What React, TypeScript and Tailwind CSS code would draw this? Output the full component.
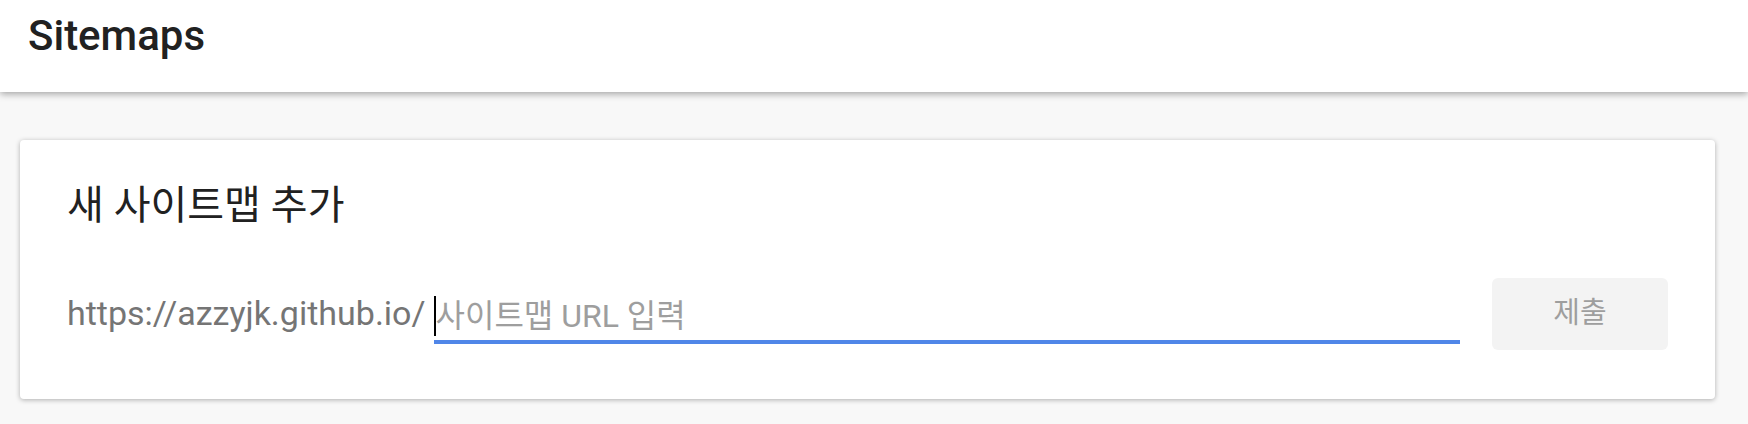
import React from "react";

export default function App() {
  return (
    <div className="min-h-screen bg-[#f8f8f8] font-['Roboto','Noto_Sans_CJK_KR',sans-serif]">
      <header className="relative z-10 h-[92px] bg-white pl-[28px] pt-[11px] shadow-[0_2px_7px_rgba(0,0,0,0.35)]">
        <h1 className="text-[42px] leading-[49px] font-medium text-[#212121]">Sitemaps</h1>
      </header>
      <main className="pt-[48px] pl-[20px] pr-[33px]">
        <section className="rounded-[4px] bg-white pt-[42px] pl-[47px] pr-[47px] pb-[49px] shadow-[0_1px_5px_rgba(0,0,0,0.3)]">
          <h2 className="text-[40px] leading-[48px] font-normal text-[#212121]">새 사이트맵 추가</h2>
          <div className="mt-[48px] flex h-[72px] items-stretch">
            <div className="flex flex-1 items-end pb-[6px]">
              <span className="mb-[11px] mr-[8px] text-[34px] leading-[40px] text-[#757575] whitespace-nowrap">
                https://azzyjk.github.io/
              </span>
              <div className="flex h-[48px] flex-1 items-start border-b-4 border-[#5086e8]">
                <span className="h-[40px] w-[2px] bg-black" />
                <span className="text-[32px] leading-[40px] text-[#9e9e9e] whitespace-nowrap">사이트맵 URL 입력</span>
              </div>
            </div>
            <button className="ml-[32px] h-[72px] w-[176px] rounded-[6px] bg-[#f3f3f3] text-[29px] text-[#9e9e9e]">
              제출
            </button>
          </div>
        </section>
      </main>
    </div>
  );
}
